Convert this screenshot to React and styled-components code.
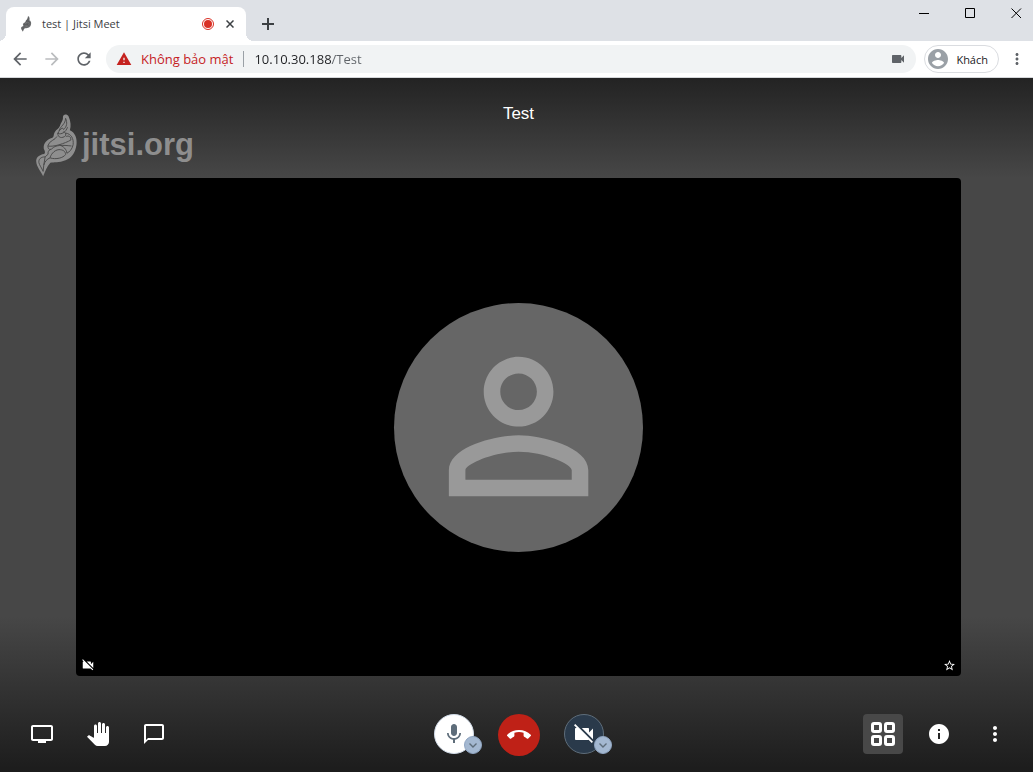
import React from "react";
import styled, { createGlobalStyle, css } from "styled-components";

const GlobalStyle = createGlobalStyle`
  *, *::before, *::after { box-sizing: border-box; }
  body { margin: 0; background: #474747; }
  button, input { font: inherit; }
`;

const uiFont = css`
  font-family: "Open Sans", "Noto Sans", sans-serif;
`;

const Window = styled.div`
  display: flex;
  flex-direction: column;
  min-height: 100vh;
  ${uiFont}
`;

const IconButton = styled.button`
  display: flex;
  align-items: center;
  justify-content: center;
  flex: none;
  width: ${(p) => p.$size || 20}px;
  height: ${(p) => p.$size || 20}px;
  padding: 0;
  border: 0;
  border-radius: ${(p) => p.$radius || 0}px;
  background: ${(p) => p.$bg || "transparent"};
  color: ${(p) => p.$color || "#3c4043"};
  cursor: pointer;
`;

/* Browser chrome */

const TabStrip = styled.div`
  display: flex;
  align-items: flex-end;
  height: 41px;
  padding: 0 11px 0 6px;
  background: #dee1e6;
`;

const Tab = styled.div`
  position: relative;
  display: flex;
  align-items: center;
  width: 240px;
  height: 34px;
  padding: 0 6px 0 12px;
  border-radius: 8px 8px 0 0;
  background: #fff;

  &::before,
  &::after {
    content: "";
    position: absolute;
    bottom: 0;
    width: 8px;
    height: 8px;
  }
  &::before {
    left: -8px;
    background: radial-gradient(circle at 0 0, transparent 8px, #fff 8px);
  }
  &::after {
    right: -8px;
    background: radial-gradient(circle at 100% 0, transparent 8px, #fff 8px);
  }
`;

const TabTitle = styled.span`
  flex: 1;
  margin-left: 8px;
  color: #3c4043;
  font-size: 11px;
  line-height: 16px;
  white-space: nowrap;
`;

const CloseTab = styled(IconButton)`
  margin-left: 6px;
`;

const NewTab = styled(IconButton)`
  margin: 0 auto 7px 12px;
`;

const WindowControls = styled.div`
  display: flex;
  align-self: flex-start;
  gap: 35px;
  padding-top: 8px;
`;

const AddressRow = styled.div`
  display: flex;
  align-items: center;
  height: 37px;
  padding: 0 6px 0 10px;
  border-bottom: 1px solid #d5d7da;
  background: #fff;
`;

const NavButtons = styled.div`
  display: flex;
  gap: 12px;
  margin-right: 12px;
`;

const Omnibox = styled.div`
  display: flex;
  flex: 1;
  align-items: center;
  height: 28px;
  padding: 0 8px 0 10px;
  border-radius: 14px;
  background: #f1f3f4;
  font-size: 13px;
  line-height: 20px;
`;

const Warning = styled.span`
  margin-left: 9px;
  padding-right: 10px;
  color: #c5221f;
  white-space: nowrap;
`;

const Separator = styled.span`
  width: 1px;
  height: 16px;
  margin-right: 10px;
  background: #9aa0a6;
`;

const UrlInput = styled.input`
  flex: 1;
  min-width: 0;
  height: 20px;
  padding: 0;
  border: 0;
  outline: 0;
  background: linear-gradient(90deg, #202124 77px, #5f6368 77px);
  background-clip: text;
  -webkit-background-clip: text;
  color: transparent;
`;

const Profile = styled.button`
  display: flex;
  align-items: center;
  gap: 8px;
  height: 28px;
  margin: 0 8px;
  padding: 0 10px 0 3px;
  border: 1px solid #dadce0;
  border-radius: 14px;
  background: #fff;
  color: #202124;
  font-size: 11px;
`;

/* Meeting */

const Stage = styled.main`
  display: flex;
  flex: 1;
  flex-direction: column;
  padding-left: 4px;
  background:
    linear-gradient(to bottom, #232323, rgba(71, 71, 71, 0)) top / 100% 100px no-repeat,
    linear-gradient(to top, #1c1c1c, rgba(71, 71, 71, 0)) bottom / 100% 156px no-repeat,
    #474747;
  font-family: "Liberation Sans", Arial, sans-serif;
`;

const StageHeader = styled.header`
  display: grid;
  grid-template-columns: 1fr auto 1fr;
  align-items: start;
  height: 100px;
`;

const Brand = styled.a`
  display: flex;
  align-items: center;
  gap: 4px;
  height: 64px;
  margin: 35px 0 0 30px;
  color: #8e8e8e;
  font-size: 31px;
  font-weight: 700;
  text-decoration: none;
`;

const RoomName = styled.h1`
  margin: 26px 0 0;
  color: #fff;
  font-size: 17px;
  font-weight: 400;
  line-height: 20px;
`;

const VideoTile = styled.section`
  position: relative;
  display: flex;
  flex: 1;
  align-items: center;
  justify-content: center;
  min-height: 300px;
  margin: 0 72px;
  border-radius: 4px;
  background: #000;
`;

const Avatar = styled.div`
  display: flex;
  position: absolute;
  inset: 25% auto;
  align-items: center;
  justify-content: center;
  aspect-ratio: 1;
  border-radius: 50%;
  background: #666;
  color: #999;

  svg {
    width: 84%;
    height: 84%;
  }
`;

const TileIndicators = styled.div`
  position: absolute;
  right: 5px;
  bottom: 4px;
  left: 5px;
  display: flex;
  align-items: flex-end;
  justify-content: space-between;
  color: #fff;
`;

const Toolbar = styled.footer`
  display: grid;
  grid-template-columns: 1fr auto 1fr;
  align-items: start;
  padding: 38px 18px 16px;
`;

const ToolGroup = styled.div`
  display: flex;
  gap: ${(p) => p.$gap || 16}px;
  justify-content: ${(p) => p.$justify || "flex-start"};
`;

const MediaControl = styled.div`
  position: relative;
  height: 40px;
`;

const MediaButton = styled(IconButton)`
  border: 1px solid ${(p) => p.$border};
`;

const CaretButton = styled(IconButton)`
  position: absolute;
  right: -8px;
  bottom: 0;
  border: 1px solid #8fa5c2;
`;

const ICONS = {
  back: "M20 11H7.83l5.59-5.59L12 4l-8 8 8 8 1.41-1.41L7.83 13H20v-2z",
  forward: "M12 4l-1.41 1.41L16.17 11H4v2h12.17l-5.58 5.59L12 20l8-8z",
  reload:
    "M17.65 6.35C16.2 4.9 14.21 4 12 4c-4.42 0-7.99 3.58-7.99 8s3.57 8 7.99 8c3.73 0 6.84-2.55 7.73-6h-2.08c-.82 2.33-3.04 4-5.65 4-3.31 0-6-2.69-6-6s2.69-6 6-6c1.66 0 3.14.69 4.22 1.78L13 11h7V4l-2.35 2.35z",
  warning: "M1 21h22L12 2 1 21zm12-3h-2v-2h2v2zm0-4h-2v-4h2v4z",
  camera:
    "M17 10.5V7c0-.55-.45-1-1-1H4c-.55 0-1 .45-1 1v10c0 .55.45 1 1 1h12c.55 0 1-.45 1-1v-3.5l4 4v-11l-4 4z",
  account:
    "M12 2C6.48 2 2 6.48 2 12s4.480 10 10 10 10-4.480 10-10S17.520 2 12 2zm0 3c1.660 0 3 1.340 3 3s-1.340 3-3 3-3-1.340-3-3 1.340-3 3-3zm0 14.200c-2.500 0-4.710-1.280-6-3.220.030-1.990 4-3.080 6-3.080 1.990 0 5.970 1.090 6 3.080-1.290 1.940-3.500 3.220-6 3.220z",
  more: "M12 8c1.1 0 2-.9 2-2s-.9-2-2-2-2 .9-2 2 .9 2 2 2zm0 2c-1.1 0-2 .9-2 2s.9 2 2 2 2-.9 2-2-.9-2-2-2zm0 6c-1.1 0-2 .9-2 2s.9 2 2 2 2-.9 2-2-.9-2-2-2z",
  person:
    "M12 5.9c1.16 0 2.1.94 2.1 2.1s-.94 2.1-2.1 2.1S9.9 9.16 9.9 8s.94-2.1 2.1-2.1m0 9c2.97 0 6.1 1.46 6.1 2.1v1.1H5.9V17c0-.64 3.13-2.1 6.1-2.1M12 4C9.79 4 8 5.79 8 8s1.79 4 4 4 4-1.79 4-4-1.79-4-4-4zm0 9c-2.67 0-8 1.34-8 4v3h16v-3c0-2.66-5.33-4-8-4z",
  cameraOff:
    "M21 6.5l-4 4V7c0-.55-.45-1-1-1H9.82L21 17.18V6.5zM3.27 2L2 3.27 4.73 6H4c-.55 0-1 .45-1 1v10c0 .55.45 1 1 1h12c.21 0 .39-.08.54-.18L19.73 21 21 19.73 3.27 2z",
  star: "M22 9.24l-7.19-.62L12 2 9.19 8.63 2 9.24l5.46 4.73L5.82 21 12 17.27 18.18 21l-1.63-7.03L22 9.24zM12 15.4l-3.76 2.27 1-4.28-3.32-2.88 4.38-.38L12 6.1l1.71 4.04 4.38.38-3.32 2.88 1 4.28L12 15.4z",
  share:
    "M21 3H3c-1.1 0-2 .9-2 2v12c0 1.1.9 2 2 2h5v2h8v-2h5c1.1 0 2-.9 2-2V5c0-1.1-.9-2-2-2zm0 14H3V5h18v12z",
  hand:
    "M23 5.5V20c0 2.2-1.8 4-4 4h-7.3c-1.08 0-2.1-.43-2.85-1.19L1 14.83s1.26-1.23 1.3-1.25c.22-.19.49-.29.79-.29.22 0 .42.06.6.16.04.01 4.31 2.46 4.31 2.46V4c0-.83.67-1.5 1.5-1.5S11 3.17 11 4v7h1V1.5c0-.83.67-1.5 1.5-1.5S15 .67 15 1.5V11h1V2.5c0-.83.67-1.5 1.5-1.5s1.5.67 1.5 1.5V11h1V5.5c0-.83.67-1.5 1.5-1.5s1.5.67 1.5 1.5z",
  chat: "M20 2H4c-1.1 0-2 .9-2 2v18l4-4h14c1.1 0 2-.9 2-2V4c0-1.1-.9-2-2-2zm0 14H6l-2 2V4h16v12z",
  mic: "M12 14c1.66 0 2.99-1.34 2.99-3L15 5c0-1.66-1.34-3-3-3S9 3.34 9 5v6c0 1.66 1.34 3 3 3zm5.3-3c0 3-2.54 5.1-5.3 5.1S6.7 14 6.7 11H5c0 3.41 2.72 6.23 6 6.72V21h2v-3.28c3.28-.48 6-3.3 6-6.72h-1.7z",
  hangup:
    "M12 9c-1.6 0-3.15.25-4.6.72v3.1c0 .39-.23.74-.56.9-.98.49-1.87 1.12-2.66 1.85-.18.18-.43.28-.7.28-.28 0-.53-.11-.71-.29L.29 13.08c-.18-.17-.29-.42-.29-.7 0-.28.11-.53.29-.71C3.34 8.78 7.46 7 12 7s8.66 1.78 11.71 4.67c.18.18.29.43.29.71 0 .28-.11.53-.29.71l-2.48 2.48c-.18.18-.43.29-.71.29-.27 0-.52-.11-.7-.28-.79-.74-1.69-1.36-2.67-1.85-.33-.16-.56-.5-.56-.9v-3.1C15.15 9.25 13.6 9 12 9z",
  info: "M12 2C6.48 2 2 6.48 2 12s4.48 10 10 10 10-4.48 10-10S17.52 2 12 2zm1 15h-2v-6h2v6zm0-8h-2V7h2v2z",
};

const Icon = ({ name, size = 24 }) => (
  <svg width={size} height={size} viewBox="0 0 24 24" fill="currentColor" aria-hidden="true">
    <path d={ICONS[name]} />
  </svg>
);

const Stroke = ({ size, d, width = 1 }) => (
  <svg
    width={size}
    height={size}
    viewBox={`0 0 ${size} ${size}`}
    fill="none"
    stroke="currentColor"
    strokeWidth={width}
    aria-hidden="true"
  >
    <path d={d} />
  </svg>
);

const Leaf = ({ width, height, fill, line }) => (
  <svg width={width} height={height} viewBox="12 8 126 194" aria-hidden="true">
    <path
      fill={fill}
      d="M36 200C30 185 16 172 15 155C14 143 24 134 39 132C44 128 41 122 38 116C36 101 46 89 64 83C69 80 67 74 71 66C76 58 85 55 87 47C90 36 97 32 96 20C96 10 109 10 113 18C120 34 121 48 117 60C133 67 140 85 137 105C133 131 121 145 104 151C84 159 68 156 58 159C47 170 43 184 36 200Z"
    />
    <g fill="none" stroke={line} strokeWidth="3" strokeLinejoin="round">
      <path d="M104 24C110 38 108 50 98 58C96 48 84 60 81 70C92 74 105 66 110 51" />
      <path d="M104 24C104 42 88 48 84 62" />
      <path d="M80 68C80 84 94 86 104 77C107 69 101 64 96 66" />
      <path d="M105 69C121 72 129 85 127 104C124 118 116 126 108 130C107 118 98 109 84 104" />
      <path d="M78 79C73 90 54 92 51 106C49 116 56 122 62 117C73 104 94 105 122 108" />
      <path d="M50 108C67 112 102 100 120 90C121 80 114 76 106 79" />
      <path d="M57 144C58 137 68 120 84 119C96 119 104 124 104 134C97 144 75 150 57 144Z" />
      <path d="M42 141C29 141 22 148 23 158C25 167 32 175 36 185L38 166C40 156 48 147 57 144" />
      <path d="M60 117C52 121 50 127 51 133L42 141L38 166" />
    </g>
  </svg>
);

const RecordingDot = () => (
  <svg width="12" height="12" viewBox="0 0 12 12" role="img" aria-label="Recording">
    <circle cx="6" cy="6" r="5.5" fill="none" stroke="#d93025" />
    <circle cx="6" cy="6" r="4" fill="#d93025" />
  </svg>
);

const TileViewIcon = () => (
  <svg width="24" height="24" viewBox="0 0 24 24" fill="none" stroke="currentColor" strokeWidth="3" aria-hidden="true">
    <rect x="1.5" y="1.5" width="8" height="8" rx="1.5" />
    <rect x="14.5" y="1.5" width="8" height="8" rx="1.5" />
    <rect x="1.5" y="14.5" width="8" height="8" rx="1.5" />
    <rect x="14.5" y="14.5" width="8" height="8" rx="1.5" />
  </svg>
);

const Tool = ({ label, children, ...rest }) => (
  <IconButton $size={40} $color="#fff" $radius={4} aria-label={label} {...rest}>
    {children}
  </IconButton>
);

const Caret = ({ label }) => (
  <CaretButton $size={18} $radius={9} $bg="#a4b8d1" $color="#5e6d7a" aria-label={label}>
    <Stroke size={10} width={1.4} d="M1.5 3.5L5 7L8.5 3.5" />
  </CaretButton>
);

export default function App() {
  return (
    <Window>
      <GlobalStyle />
      <TabStrip>
        <Tab>
          <Leaf width={16} height={16} fill="#77797b" line="#333" />
          <TabTitle>test | Jitsi Meet</TabTitle>
          <RecordingDot />
          <CloseTab aria-label="Close tab">
            <Stroke size={8} width={1.5} d="M0.5 0.5L7.5 7.5M7.5 0.5L0.5 7.5" />
          </CloseTab>
        </Tab>
        <NewTab aria-label="New tab">
          <Stroke size={12} width={2} d="M6 0V12M0 6H12" />
        </NewTab>
        <WindowControls>
          <IconButton $size={11} $color="#000" aria-label="Minimize">
            <Stroke size={11} d="M0 5.5H10" />
          </IconButton>
          <IconButton $size={11} $color="#000" aria-label="Maximize">
            <Stroke size={11} d="M0.5 0.5H9.5V9.5H0.5Z" />
          </IconButton>
          <IconButton $size={11} $color="#000" aria-label="Close window">
            <Stroke size={11} d="M0.5 0.5L10 10M10 0.5L0.5 10" />
          </IconButton>
        </WindowControls>
      </TabStrip>

      <AddressRow>
        <NavButtons>
          <IconButton $color="#5f6368" aria-label="Back"><Icon name="back" size={20} /></IconButton>
          <IconButton $color="#babcbe" aria-label="Forward"><Icon name="forward" size={20} /></IconButton>
          <IconButton $color="#5f6368" aria-label="Reload"><Icon name="reload" size={20} /></IconButton>
        </NavButtons>
        <Omnibox>
          <IconButton $size={16} $color="#c5221f" aria-label="Site information">
            <Icon name="warning" size={16} />
          </IconButton>
          <Warning>Không bảo mật</Warning>
          <Separator />
          <UrlInput type="text" aria-label="Address" defaultValue="10.10.30.188/Test" />
          <IconButton $color="#5f6368" aria-label="Camera access"><Icon name="camera" size={16} /></IconButton>
        </Omnibox>
        <Profile>
          <svg width="20" height="20" viewBox="2 2 20 20" fill="#9aa0a6" aria-hidden="true">
            <path d={ICONS.account} />
          </svg>
          Khách
        </Profile>
        <IconButton $color="#5f6368" aria-label="Browser menu"><Icon name="more" size={18} /></IconButton>
      </AddressRow>

      <Stage>
        <StageHeader>
          <Brand href="https://jitsi.org">
            <Leaf width={44} height={64} fill="#8e8e8e" line="#4c4c4c" />
            jitsi.org
          </Brand>
          <RoomName>Test</RoomName>
        </StageHeader>

        <VideoTile aria-label="Participant">
          <Avatar><Icon name="person" /></Avatar>
          <TileIndicators>
            <Icon name="cameraOff" size={14} />
            <Icon name="star" size={13} />
          </TileIndicators>
        </VideoTile>

        <Toolbar>
          <ToolGroup>
            <Tool label="Share screen"><Icon name="share" /></Tool>
            <Tool label="Raise hand"><Icon name="hand" /></Tool>
            <Tool label="Open chat"><Icon name="chat" size={24} /></Tool>
          </ToolGroup>
          <ToolGroup $gap={24}>
            <MediaControl>
              <MediaButton $size={40} $radius={20} $bg="#fff" $border="#d1dbe8" $color="#5e6d7a" aria-label="Mute">
                <Icon name="mic" />
              </MediaButton>
              <Caret label="Audio settings" />
            </MediaControl>
            <IconButton $size={42} $radius={21} $bg="#bf2117" $color="#fff" aria-label="Leave">
              <Icon name="hangup" />
            </IconButton>
            <MediaControl>
              <MediaButton $size={40} $radius={20} $bg="#2a3a4b" $border="#5e6d7a" $color="#fff" aria-label="Start camera">
                <Icon name="cameraOff" />
              </MediaButton>
              <Caret label="Video settings" />
            </MediaControl>
          </ToolGroup>
          <ToolGroup $justify="flex-end">
            <Tool label="Toggle tile view" $bg="#484848"><TileViewIcon /></Tool>
            <Tool label="Meeting info"><Icon name="info" /></Tool>
            <Tool label="More actions"><Icon name="more" /></Tool>
          </ToolGroup>
        </Toolbar>
      </Stage>
    </Window>
  );
}
